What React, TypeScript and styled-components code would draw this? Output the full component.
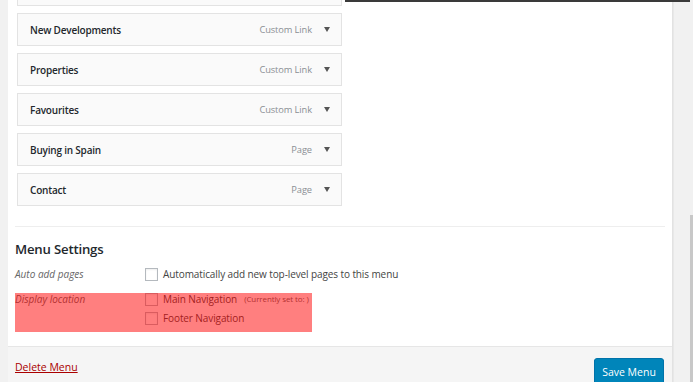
import React from 'react';
import styled, { createGlobalStyle } from 'styled-components';

const GlobalStyle = createGlobalStyle`
  html, body {
    margin: 0;
    padding: 0;
    width: 693px;
    height: 382px;
    overflow: hidden;
    background: #f1f1f1;
    font-family: 'Open Sans', 'Noto Sans', sans-serif;
  }
`;

const Screen = styled.div`
  position: relative;
  display: flex;
  width: 693px;
  height: 382px;
  overflow: hidden;
`;

const TopEdge = styled.div`
  position: absolute;
  top: 0;
  left: 345px;
  width: 345px;
  height: 2px;
  background: #3a3a3a;
`;

const Gutter = styled.div`
  width: 8px;
  flex-shrink: 0;
  background: #f1f1f1;
`;

const Panel = styled.div`
  width: 665px;
  flex-shrink: 0;
  display: flex;
  flex-direction: column;
  border-right: 1px solid #e2e2e2;
  box-sizing: border-box;
`;

const Body = styled.div`
  background: #fff;
  padding: 0 7px;
  border-bottom: 1px solid #e6e6e6;
  height: 347px;
  flex-shrink: 0;
  box-sizing: border-box;
`;

const ItemList = styled.ul`
  list-style: none;
  margin: -27px 0 0 2px;
  padding: 0;
  width: 325px;
  display: flex;
  flex-direction: column;
  gap: 7px;
`;

const Item = styled.li`
  height: 33px;
  box-sizing: border-box;
  display: flex;
  align-items: center;
  padding: 0 11px 0 12px;
  background: #fafafa;
  border: 1px solid #e3e3e3;
`;

const ItemTitle = styled.span`
  flex: 1;
  font-size: 10px;
  font-weight: 600;
  color: #23282d;
  letter-spacing: -0.2px;
`;

const ItemType = styled.span`
  font-size: 9.3px;
  color: #8a8f94;
  margin-right: 12px;
  letter-spacing: -0.1px;
`;

const Arrow = styled.span`
  width: 0;
  height: 0;
  border-left: 3.5px solid transparent;
  border-right: 3.5px solid transparent;
  border-top: 5px solid #555;
`;

const Divider = styled.hr`
  border: none;
  border-top: 1px solid #eeeeee;
  margin: 20px 0 0;
`;

const Heading = styled.h3`
  margin: 12px 0 6px;
  font-size: 13.2px;
  font-weight: 600;
  color: #23282d;
  letter-spacing: -0.2px;
  line-height: 20px;
`;

const SettingRow = styled.div`
  display: grid;
  grid-template-columns: 130px 1fr;
  margin-bottom: 7px;
`;

const SettingLabel = styled.span`
  font-size: 10px;
  font-style: italic;
  color: #666;
  line-height: 18px;
`;

const Options = styled.div`
  display: flex;
  flex-direction: column;
  gap: 1px;
`;

const Option = styled.label`
  display: flex;
  align-items: center;
  gap: 5px;
  font-size: 10px;
  color: #444;
  line-height: 18px;
  letter-spacing: -0.1px;
`;

const Box = styled.span`
  width: 11px;
  height: 11px;
  border: 1px solid #b4b9be;
  background: #fff;
  box-shadow: inset 0 1px 2px rgba(0, 0, 0, 0.07);
`;

const Note = styled.span`
  font-size: 8px;
  color: #666;
  margin-left: 2px;
`;

const Highlight = styled.div`
  position: absolute;
  left: 15px;
  top: 293px;
  width: 297px;
  height: 39px;
  background: rgba(255, 0, 0, 0.5);
  pointer-events: none;
`;

const Footer = styled.div`
  flex: 1;
  min-height: 0;
  background: #f5f5f5;
  display: flex;
  align-items: flex-start;
  justify-content: space-between;
  padding: 11px 8px 0 7px;
`;

const DeleteLink = styled.a`
  font-size: 10.5px;
  color: #a00;
  text-decoration: underline;
  line-height: 18px;
  cursor: pointer;
`;

const SaveButton = styled.button`
  font-family: inherit;
  font-size: 10.5px;
  color: #fff;
  background: #0085ba;
  border: 1px solid #0073aa;
  border-radius: 3px;
  box-shadow: 0 1px 0 #006799;
  height: 28px;
  width: 70px;
  padding: 0;
  flex-shrink: 0;
`;

const RightRail = styled.div`
  position: relative;
  flex: 1;
  background: #f1f1f1;
  border-left: 1px solid #e8e8e8;
`;

const ScrollThumb = styled.div`
  position: absolute;
  right: 0;
  top: 215px;
  width: 3px;
  bottom: 0;
  background: #c8c8c8;
`;

type MenuItem = { title: string; type: string };

const items: MenuItem[] = [
  { title: 'New Developments', type: 'Custom Link' },
  { title: 'Properties', type: 'Custom Link' },
  { title: 'Favourites', type: 'Custom Link' },
  { title: 'Buying in Spain', type: 'Page' },
  { title: 'Contact', type: 'Page' },
];

export default function App() {
  return (
    <>
      <GlobalStyle />
      <Screen>
        <Gutter />
        <Panel>
          <Body>
            <ItemList>
              {/* item scrolled above the top edge; only its lower border shows */}
              <Item aria-hidden />
              {items.map((it) => (
                <Item key={it.title}>
                  <ItemTitle>{it.title}</ItemTitle>
                  <ItemType>{it.type}</ItemType>
                  <Arrow />
                </Item>
              ))}
            </ItemList>
            <Divider />
            <Heading>Menu Settings</Heading>
            <SettingRow>
              <SettingLabel>Auto add pages</SettingLabel>
              <Options>
                <Option>
                  <Box />
                  Automatically add new top-level pages to this menu
                </Option>
              </Options>
            </SettingRow>
            <SettingRow>
              <SettingLabel>Display location</SettingLabel>
              <Options>
                <Option>
                  <Box />
                  Main Navigation <Note>(Currently set to: )</Note>
                </Option>
                <Option>
                  <Box />
                  Footer Navigation
                </Option>
              </Options>
            </SettingRow>
          </Body>
          <Footer>
            <DeleteLink>Delete Menu</DeleteLink>
            <SaveButton>Save Menu</SaveButton>
          </Footer>
        </Panel>
        <RightRail>
          <ScrollThumb />
        </RightRail>
        <Highlight />
        <TopEdge />
      </Screen>
    </>
  );
}
